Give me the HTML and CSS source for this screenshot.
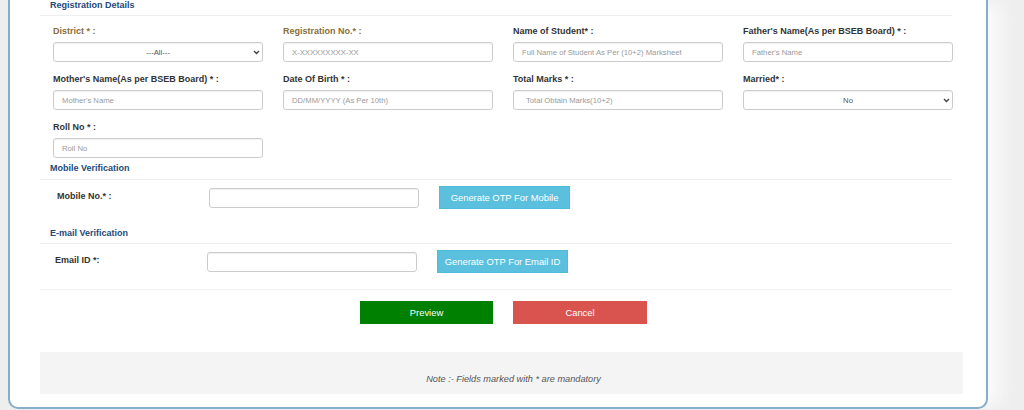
FILE: index.html
```html
<!DOCTYPE html>
<html lang="en">
<head>
    <meta charset="UTF-8">
    <meta name="viewport" content="width=device-width, initial-scale=1.0">
    <title>Student Registration</title>
    <link rel="stylesheet" href="styles.css">
</head>

<body>
    <div class="panel">
        <div class="section">
            <h4 class="section-title">Registration Details</h4>
            <div class="field-grid">
                <div class="field">
                    <label class="warn">District * :</label>
                    <div class="select-wrap">
                        <select class="control control-center">
                            <option>---All---</option>
                        </select>
                        <svg class="chev" width="7" height="5" viewBox="0 0 7 5"><path d="M1 1 L3.5 3.5 L6 1" fill="none" stroke="#444" stroke-width="1.4"/></svg>
                    </div>
                </div>
                <div class="field">
                    <label class="warn">Registration No.* :</label>
                    <input type="text" class="control" placeholder="X-XXXXXXXXX-XX">
                </div>
                <div class="field">
                    <label>Name of Student* :</label>
                    <input type="text" class="control" placeholder="Full Name of Student As Per (10+2) Marksheet">
                </div>
                <div class="field">
                    <label>Father's Name(As per BSEB Board) * :</label>
                    <input type="text" class="control" placeholder="Father's Name">
                </div>

                <div class="field">
                    <label>Mother's Name(As per BSEB Board) * :</label>
                    <input type="text" class="control" placeholder="Mother's Name">
                </div>
                <div class="field">
                    <label>Date Of Birth * :</label>
                    <input type="text" class="control" placeholder="DD/MM/YYYY (As Per 10th)">
                </div>
                <div class="field">
                    <label>Total Marks * :</label>
                    <input type="text" class="control control-indent" placeholder="Total Obtain Marks(10+2)">
                </div>
                <div class="field">
                    <label>Married* :</label>
                    <div class="select-wrap">
                        <select class="control control-center">
                            <option>No</option>
                            <option>Yes</option>
                        </select>
                        <svg class="chev" width="7" height="5" viewBox="0 0 7 5"><path d="M1 1 L3.5 3.5 L6 1" fill="none" stroke="#444" stroke-width="1.4"/></svg>
                    </div>
                </div>

                <div class="field">
                    <label>Roll No * :</label>
                    <input type="text" class="control" placeholder="Roll No">
                </div>
            </div>

            <!-- Mobile -->
            <h4 class="section-title title-gap">Mobile Verification</h4>
            <div class="verify-row">
                <label>Mobile No.* :</label>
                <input type="text" class="control">
                <button type="button" class="btn btn-info">Generate OTP For Mobile</button>
            </div>

            <!-- Email -->
            <h4 class="section-title title-gap-lg">E-mail Verification</h4>
            <div class="verify-row verify-email">
                <label>Email ID *:</label>
                <input type="text" class="control">
                <button type="button" class="btn btn-info">Generate OTP For Email ID</button>
            </div>

            <div class="divider"></div>

            <div class="actions">
                <button type="button" class="btn btn-success">Preview</button>
                <button type="button" class="btn btn-danger">Cancel</button>
            </div>
        </div>

        <div class="note">Note :- Fields marked with * are mandatory</div>
    </div>
</body>
</html>
```

FILE: styles.css
```css
/* General */
body {
    margin: 0;
    background-color: #eeeeee;
    font-family: "Liberation Sans", Arial, sans-serif;
    color: #333;
}

.panel {
    margin-left: 8px;
    width: 976px;
    background-color: #fff;
    border: 2px solid #86aecb;
    border-top: none;
    border-radius: 0 0 10px 10px;
    padding-bottom: 13px;
    box-shadow: 16px 0 18px -4px #fbfbfb;
}

.section {
    margin: 0 34px 0 30px;
}

/* Section headings */
.section-title {
    margin: 0;
    padding: 0 0 4px 10px;
    font-size: 9px;
    line-height: 11px;
    font-weight: bold;
    color: #24497a;
    border-bottom: 1px solid #eeeeee;
}

.title-gap {
    margin-top: 5px;
    padding-bottom: 5px;
}

.title-gap-lg {
    margin-top: 19px;
    padding-bottom: 4px;
}

/* Registration grid */
.field-grid {
    display: grid;
    grid-template-columns: repeat(4, 210px);
    column-gap: 20px;
    row-gap: 11px;
    padding: 9px 0 0 13px;
}

.field label,
.verify-row label {
    display: block;
    font-size: 9px;
    line-height: 12px;
    font-weight: bold;
    color: #333;
    margin-bottom: 5px;
}

.field label.warn {
    color: #8a6d3b;
}

.control {
    display: block;
    box-sizing: border-box;
    width: 210px;
    height: 20px;
    margin: 0;
    padding: 0 8px;
    border: 1px solid #cccccc;
    border-radius: 3px;
    box-shadow: inset 0 1px 1px rgba(0, 0, 0, 0.06);
    background-color: #fff;
    font-family: "Liberation Sans", Arial, sans-serif;
    font-size: 7.7px;
    color: #555;
    outline: none;
}

.control::placeholder {
    color: #9a9a9a;
}

.control-indent {
    padding-left: 12px;
}

.control-center {
    appearance: none;
    -webkit-appearance: none;
    text-align: center;
    text-align-last: center;
}

.select-wrap {
    position: relative;
    width: 210px;
}

.chev {
    position: absolute;
    right: 3px;
    top: 8px;
    pointer-events: none;
}

/* Verification rows */
.verify-row {
    display: flex;
    align-items: center;
    padding-left: 17px;
    margin-top: 6px;
}

.verify-row label {
    width: 152px;
    margin: 0 0 3px 0;
}

.verify-email {
    padding-left: 15px;
    margin-top: 6px;
}

.verify-row .btn {
    margin-left: 20px;
    width: 131px;
}

/* Buttons */
.btn {
    height: 23px;
    border: none;
    border-radius: 0;
    color: #fff;
    font-family: "Liberation Sans", Arial, sans-serif;
    font-size: 9.4px;
    cursor: pointer;
    padding: 0;
}

.btn-info {
    background-color: #5bc0de;
    border: 1px solid #4fbbdb;
}

.btn-success {
    width: 133px;
    background-color: #008000;
}

.btn-danger {
    width: 134px;
    background-color: #d9534f;
}

.divider {
    margin-top: 16px;
    border-top: 1px solid #f0f0f0;
}

.actions {
    display: flex;
    justify-content: center;
    gap: 20px;
    padding-left: 15px;
    margin-top: 11px;
}

/* Note box */
.note {
    margin: 28px 23px 0 30px;
    padding: 22px 0 9px 24px;
    background-color: #f4f4f4;
    text-align: center;
    font-size: 9.2px;
    line-height: 11px;
    font-style: italic;
    color: #555;
}
```
